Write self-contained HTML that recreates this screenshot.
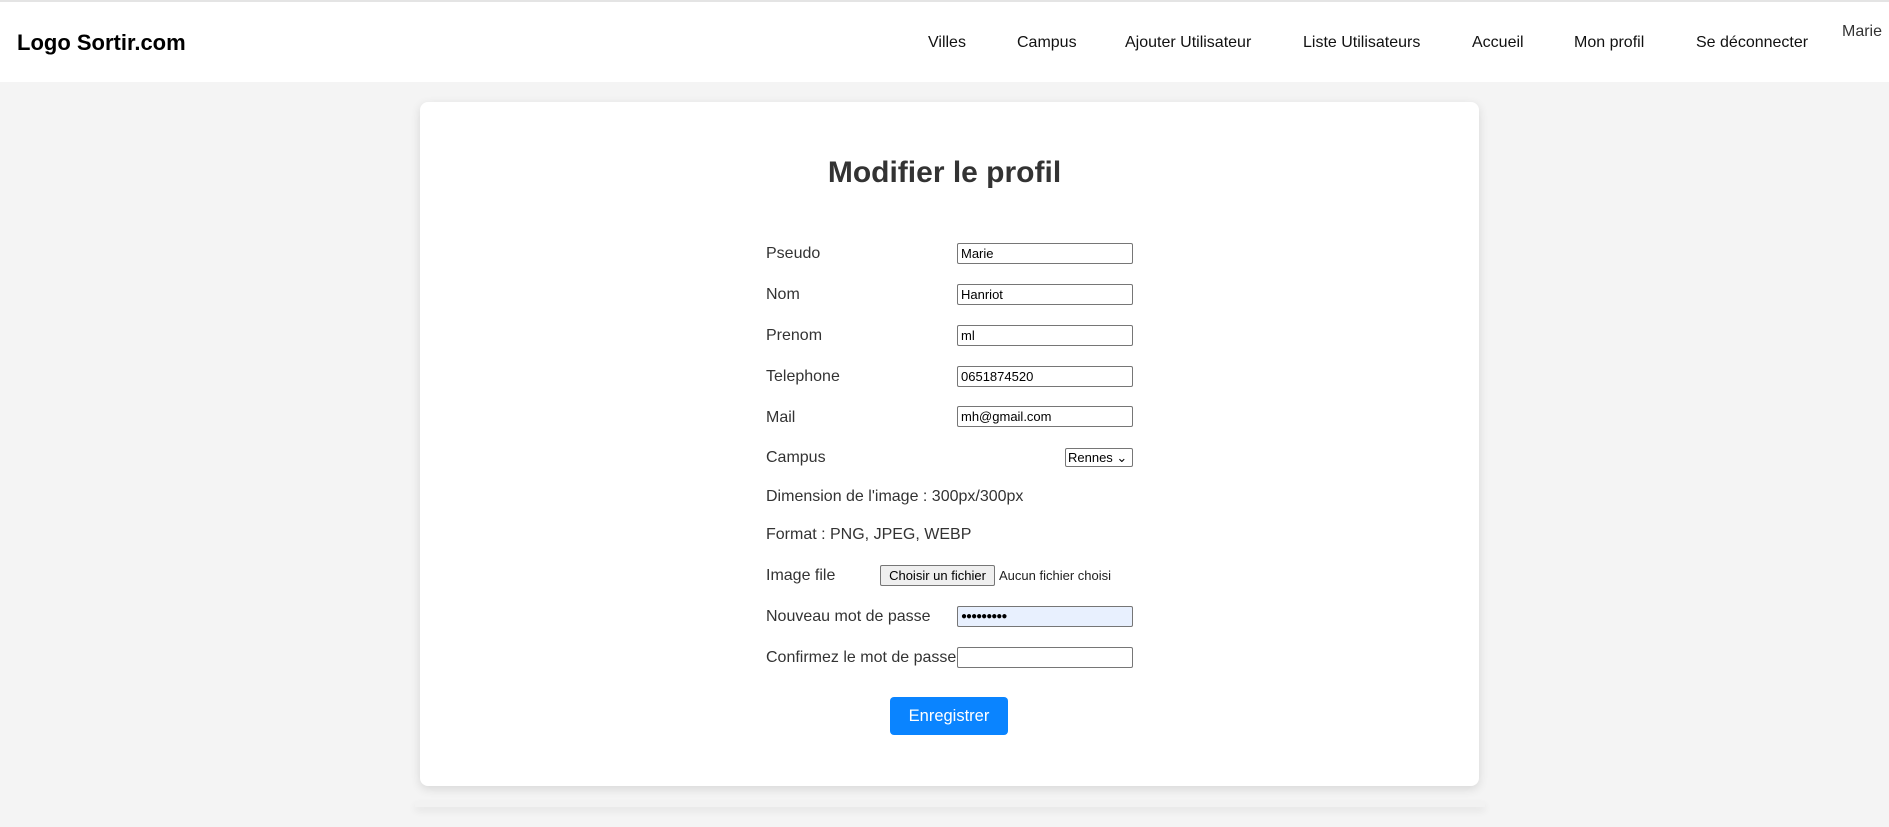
<!DOCTYPE html>
<html><head><meta charset="utf-8"><style>
*{box-sizing:border-box;margin:0;padding:0}
body{width:1889px;height:827px;background:#f4f4f4;font-family:"Liberation Sans",Arial,sans-serif;position:relative;overflow:hidden}
.hdr{position:absolute;left:0;top:0;width:1889px;height:82px;background:#fff;border-top:2px solid #e4e4e4}
.logo{position:absolute;left:17px;top:28px;font-size:22px;font-weight:bold;color:#000}
.nav{position:absolute;top:32px;font-size:16px;color:#111}
.card{position:absolute;left:420px;top:102px;width:1059px;height:684px;background:#fff;border-radius:8px;box-shadow:0 3px 10px rgba(0,0,0,.12)}
.foot{position:absolute;left:415px;top:801px;width:1070px;height:6px;background:#f2f2f2;box-shadow:0 4px 8px rgba(0,0,0,.07)}
h1{position:absolute;left:0;width:100%;top:156px;text-align:center;font-size:30px;font-weight:bold;color:#333}
.lbl{position:absolute;left:766px;font-size:16px;color:#333}
.inp{position:absolute;left:957px;width:176px;height:21px;border:1px solid #767676;border-radius:2px;background:#fff;font-size:13px;color:#000;padding:2px 3px;line-height:15px}
.sel{position:absolute;left:1065px;width:68px;height:19px;border:1px solid #767676;border-radius:2px;font-size:13px;padding:1px 2px;line-height:15px}
.btn{position:absolute;left:890px;top:697px;width:118px;height:38px;background:#0a84ff;border-radius:4px;color:#fff;font-size:16.5px;text-align:center;line-height:38px}
</style></head><body>
<div class="hdr">
<div class="logo">Logo Sortir.com</div>
<div class="nav" style="left:928px">Villes</div>
<div class="nav" style="left:1017px">Campus</div>
<div class="nav" style="left:1125px">Ajouter Utilisateur</div>
<div class="nav" style="left:1303px">Liste Utilisateurs</div>
<div class="nav" style="left:1472px">Accueil</div>
<div class="nav" style="left:1574px">Mon profil</div>
<div class="nav" style="left:1696px">Se déconnecter</div>
<div class="nav" style="left:1842px;top:21px;color:#333">Marie</div>
</div>
<div class="card"></div>
<div class="foot"></div>
<h1>Modifier le profil</h1>
<div class="lbl" style="top:245px">Pseudo</div><div class="inp" style="top:243px">Marie</div>
<div class="lbl" style="top:286px">Nom</div><div class="inp" style="top:284px">Hanriot</div>
<div class="lbl" style="top:327px">Prenom</div><div class="inp" style="top:325px">ml</div>
<div class="lbl" style="top:368px">Telephone</div><div class="inp" style="top:366px">0651874520</div>
<div class="lbl" style="top:409px">Mail</div><div class="inp" style="top:406px">mh@gmail.com</div>
<div class="lbl" style="top:449px">Campus</div><div class="sel" style="top:448px">Rennes &#8964;</div>
<div class="lbl" style="top:488px">Dimension de l'image : 300px/300px</div>
<div class="lbl" style="top:526px">Format : PNG, JPEG, WEBP</div>
<div class="lbl" style="top:567px">Image file</div>
<div style="position:absolute;left:880px;top:565px;width:115px;height:21px;border:1px solid #767676;border-radius:2px;background:#efefef;font-size:13px;text-align:center;line-height:19px">Choisir un fichier</div>
<div style="position:absolute;left:999px;top:568px;font-size:13px;color:#222">Aucun fichier choisi</div>
<div class="lbl" style="top:608px">Nouveau mot de passe</div><div class="inp" style="top:606px;background:#e8f0fe;font-size:10px;letter-spacing:-1px">●●●●●●●●●</div>
<div class="lbl" style="top:649px">Confirmez le mot de passe</div><div class="inp" style="top:647px"></div>
<div class="btn">Enregistrer</div>
</body></html>
